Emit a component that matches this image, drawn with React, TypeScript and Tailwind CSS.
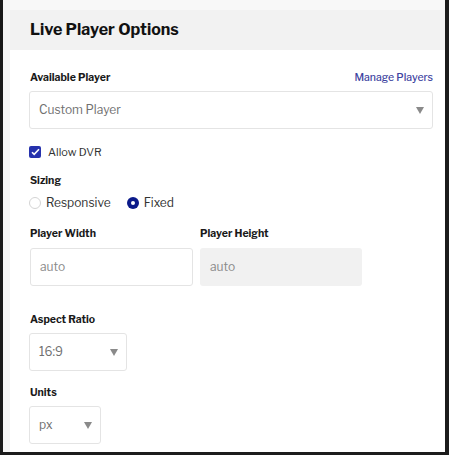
import { type ReactNode } from 'react'

const font = { fontFamily: '"Libre Franklin", Inter, "Noto Sans", sans-serif' }

const Label = ({ children, className = '' }: { children: ReactNode; className?: string }) => (
  <p className={`h-[14px] text-[10.5px] font-bold leading-[14px] text-[#1a1a1a] ${className}`}>{children}</p>
)

const Caret = () => (
  <svg width="8" height="7" viewBox="0 0 8 7" className="shrink-0">
    <path d="M0 0h8L4 7z" fill="#8a8a8a" />
  </svg>
)

function Select({ value, className }: { value: string; className: string }) {
  return (
    <div className={`flex h-[38px] items-center justify-between rounded-[3px] border border-[#e4e4e4] bg-white pl-[9px] pr-[8px] text-[12px] text-[#707070] ${className}`}>
      <span>{value}</span>
      <Caret />
    </div>
  )
}

export default function App() {
  return (
    <div
      style={font}
      className="box-border h-[455px] w-[449px] overflow-hidden border-b-[3px] border-l-[3px] border-r-[4px] border-[#1c1c1c] bg-[#f8f8f8] pl-[7px] pt-[10px]"
    >
      <div className="flex h-full flex-col bg-white">
        <header className="flex h-[40px] items-center bg-[#f2f2f2] px-[20px]">
          <h1 className="text-[16px] font-bold text-[#111]">Live Player Options</h1>
        </header>

        <div className="flex flex-col pl-[19px] pr-[12px] pt-[21px]">
          <div className="flex items-center justify-between pl-px">
            <Label>Available Player</Label>
            <a className="text-[10.5px] font-medium leading-[14px] text-[#3d43a0]">Manage Players</a>
          </div>
          <Select value="Custom Player" className="mt-[6px] w-full" />

          <label className="mt-[16px] flex h-[14px] items-center gap-[7px] text-[11px] text-[#333]">
            <span className="grid h-[12px] w-[12px] place-items-center rounded-[2px] bg-[#2632ad]">
              <svg width="9" height="8" viewBox="0 0 9 8">
                <path d="M1 4.2l2.2 2.2L8 1.2" stroke="#fff" strokeWidth="1.6" fill="none" />
              </svg>
            </span>
            Allow DVR
          </label>

          <Label className="mt-[15px] pl-px">Sizing</Label>
          <div className="mt-[7px] flex h-[16px] items-center text-[12px] text-[#333]">
            <span className="h-[12px] w-[12px] rounded-full border border-[#d4d4d4] bg-white" />
            <span className="ml-[5px]">Responsive</span>
            <span className="ml-[16px] grid h-[12px] w-[12px] place-items-center rounded-full bg-[#0b1a8a]">
              <span className="h-[4px] w-[4px] rounded-full bg-white" />
            </span>
            <span className="ml-[5px]">Fixed</span>
          </div>

          <div className="mt-[16px] flex gap-[7px] pl-px">
            <div className="w-[163px]">
              <Label>Player Width</Label>
              <div className="mt-[7px] flex h-[38px] items-center rounded-[3px] border border-[#e4e4e4] bg-white px-[9px] text-[12px] text-[#8a8a8a]">
                auto
              </div>
            </div>
            <div className="w-[162px]">
              <Label>Player Height</Label>
              <div className="mt-[7px] flex h-[38px] items-center rounded-[3px] bg-[#f1f1f1] px-[10px] text-[12px] text-[#8a8a8a]">
                auto
              </div>
            </div>
          </div>

          <Label className="mt-[27px] pl-px">Aspect Ratio</Label>
          <Select value="16:9" className="mt-[6px] w-[98px]" />

          <Label className="mt-[15px] pl-px">Units</Label>
          <Select value="px" className="mt-[6px] w-[72px]" />
        </div>
      </div>
    </div>
  )
}
